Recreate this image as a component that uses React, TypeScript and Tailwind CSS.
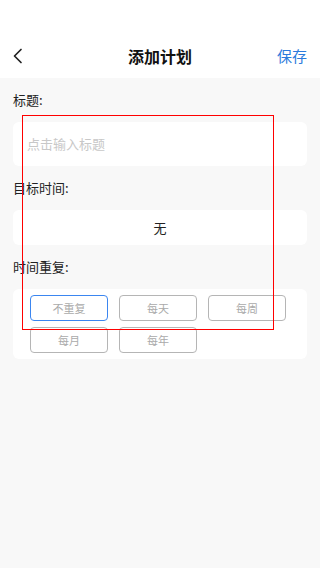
import { useState } from "react";

const repeatOptions = ["不重复", "每天", "每周", "每月", "每年"];

export default function App() {
  const [repeat, setRepeat] = useState("不重复");
  return (
    <div
      className="relative min-h-[568px] w-[320px] bg-[#f8f8f8]"
      style={{ fontFamily: '"Noto Sans CJK SC", "Noto Sans", sans-serif' }}
    >
      <div className="h-[78px] bg-white">
        <div className="flex h-full items-end pb-[8px]">
          <div className="relative flex h-[28px] w-full items-center justify-center">
            <button className="absolute left-[12px] top-[3px] flex h-[22px] w-[14px] items-center">
              <svg width="11" height="16" viewBox="0 0 11 16" fill="none">
                <path d="M9 1.5 2.5 8 9 14.5" stroke="#222" strokeWidth="1.7" strokeLinecap="round" strokeLinejoin="round" />
              </svg>
            </button>
            <div className="text-[16px] font-bold leading-none text-[#111]">添加计划</div>
            <button className="absolute right-[13px] top-[6px] text-[15px] leading-none text-[#2b7bdc]">保存</button>
          </div>
        </div>
      </div>

      <div className="px-[13px]">
        <div className="flex h-[44px] items-center text-[13px] text-[#222]">标题:</div>
        <div className="flex h-[44px] items-center rounded-[6px] bg-white px-[14px]">
          <input
            className="w-full bg-transparent text-[13px] text-[#333] outline-none placeholder:text-[#c8c8c8]"
            placeholder="点击输入标题"
          />
        </div>

        <div className="flex h-[44px] items-center text-[13px] text-[#222]">目标时间:</div>
        <div className="flex h-[35px] items-center justify-center rounded-[6px] bg-white text-[13px] text-[#222]">
          无
        </div>

        <div className="flex h-[44px] items-center text-[13px] text-[#222]">时间重复:</div>
        <div className="grid grid-cols-[78px_78px_78px] gap-x-[11px] gap-y-[6px] rounded-[6px] bg-white px-[17px] pb-[6px] pt-[6px]">
          {repeatOptions.map((o) => (
            <button
              key={o}
              onClick={() => setRepeat(o)}
              className={
                repeat === o
                  ? "flex h-[26px] items-center justify-center rounded-[4px] border border-[#3b86f0] text-[11px] text-[#aaa]"
                  : "flex h-[26px] items-center justify-center rounded-[4px] border border-[#b5b5b5] text-[11px] text-[#aaa]"
              }
            >
              {o}
            </button>
          ))}
        </div>
      </div>

      <div className="pointer-events-none absolute left-[23px] top-[116px] h-[213px] w-[250px] outline outline-1 outline-[#ff0000]" />
    </div>
  );
}
